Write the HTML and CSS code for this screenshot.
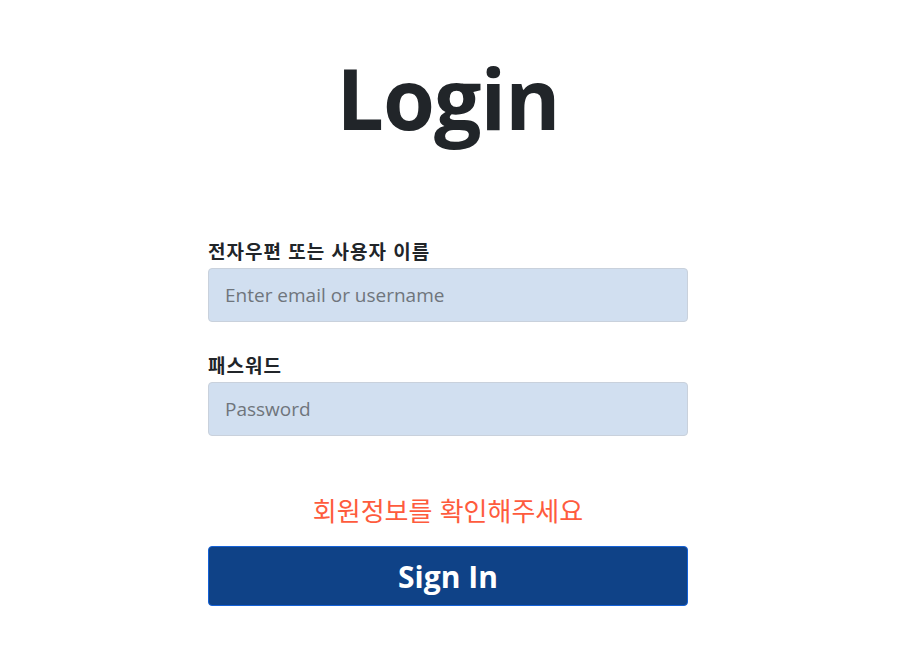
FILE: index.html
```html
<!DOCTYPE html>
<html lang="ko">
<head>
<meta charset="utf-8">
<title>Login</title>
<link rel="stylesheet" href="styles.css">
</head>
<body>
<div class="page">
  <h1 class="title">Login</h1>
  <form class="login-form">
    <div class="field">
      <label class="label" for="user">전자우편 또는 사용자 이름</label>
      <input class="input" id="user" type="text" placeholder="Enter email or username">
    </div>
    <div class="field">
      <label class="label" for="pw">패스워드</label>
      <input class="input" id="pw" type="password" placeholder="Password">
    </div>
    <p class="error">회원정보를 확인해주세요</p>
    <button class="btn" type="button">Sign In</button>
  </form>
</div>
</body>
</html>
```

FILE: styles.css
```css
* { box-sizing: border-box; }
html, body { margin: 0; padding: 0; background: #fff; }
body {
  font-family: "Open Sans", "Noto Sans CJK KR", sans-serif;
  color: #212529;
}
.page {
  width: 896px;
  display: flex;
  flex-direction: column;
  align-items: center;
}
.title {
  margin: 38px 0 0;
  font-size: 84px;
  font-weight: 700;
  line-height: 120px;
  color: #212529;
  letter-spacing: -1px;
}
.login-form {
  width: 480px;
  margin-top: 80px;
  display: flex;
  flex-direction: column;
}
.field {
  display: flex;
  flex-direction: column;
  margin-bottom: 30px;
}
.label {
  font-family: "Noto Sans CJK KR", "Open Sans", sans-serif;
  font-weight: 700;
  font-size: 19px;
  letter-spacing: 1px;
  line-height: 26px;
  margin-bottom: 4px;
  color: #212529;
}
.input {
  height: 54px;
  width: 100%;
  padding: 0 16px;
  font-family: "Open Sans", "Noto Sans CJK KR", sans-serif;
  font-size: 19px;
  background: #d1dff0;
  border: 1px solid #c9d1dc;
  border-radius: 4px;
  color: #212529;
  outline: none;
}
.input::placeholder { color: #6f757c; }
.error {
  margin: 26px 0 18px;
  text-align: center;
  font-family: "Noto Sans CJK KR", sans-serif;
  font-size: 26px;
  line-height: 36px;
  color: #fe5b3d;
}
.btn {
  height: 60px;
  width: 100%;
  background: #0f4287;
  border: 1px solid #1461d6;
  border-radius: 4px;
  color: #fff;
  font-family: "Open Sans", "Noto Sans CJK KR", sans-serif;
  font-weight: 700;
  font-size: 30px;
  cursor: pointer;
}
```
